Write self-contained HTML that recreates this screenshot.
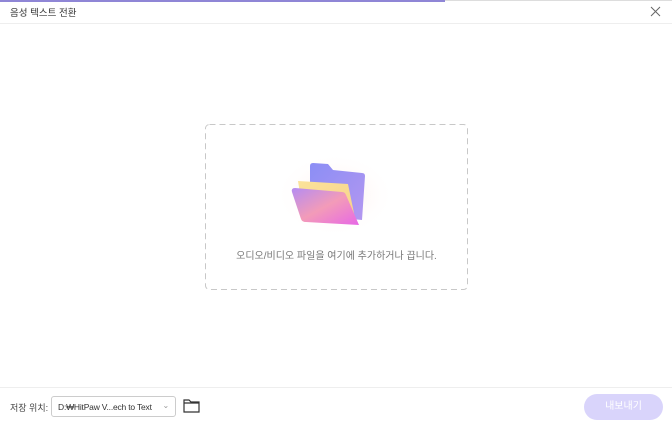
<!DOCTYPE html>
<html><head><meta charset="utf-8"><style>
*{margin:0;padding:0;box-sizing:border-box}
body{width:672px;height:425px;background:#fff;font-family:"Liberation Sans","Noto Sans CJK KR",sans-serif;position:relative;overflow:hidden}
.topbar{position:absolute;top:0;left:0;width:445px;height:2px;background:#8f86d6}
.topbar2{position:absolute;top:0;left:445px;width:227px;height:1px;background:#ddd}
.title{position:absolute;left:10px;top:5px;font-size:9.5px;color:#333}
.close{position:absolute;left:650px;top:6px}
.hline{position:absolute;left:0;top:23px;width:672px;height:1px;background:#eee}
.txt{position:absolute;left:205px;top:247px;width:263px;text-align:center;font-size:10px;color:#777}
.fline{position:absolute;left:0;top:387px;width:672px;height:1px;background:#eee}
.lbl{position:absolute;left:10px;top:401px;font-size:9px;color:#444}
.sel{position:absolute;left:51px;top:396px;width:125px;height:21px;border:1px solid #ccc;border-radius:3px;font-size:8.5px;color:#333;padding:5px 0 0 6px;letter-spacing:-0.2px}
.sel span{position:absolute;right:6px;top:4px;color:#999;font-size:8px}
.btn{position:absolute;left:584px;top:394px;width:79px;height:26px;border-radius:13px;background:#d9d4fb;color:#fff;font-size:10px;text-align:center;line-height:26px}
</style></head><body>
<div class="topbar"></div><div class="topbar2"></div>
<div class="title">음성 텍스트 전환</div>
<svg class="close" width="11" height="11" viewBox="0 0 11 11"><path d="M1 1L10 10M10 1L1 10" stroke="#666" stroke-width="1"/></svg>
<div class="hline"></div>
<svg style="position:absolute;left:204px;top:123px" width="265" height="168"><rect x="1.5" y="1.5" width="262" height="165" rx="4" fill="none" stroke="#c8c8c8" stroke-width="1" stroke-dasharray="6 4"/></svg>
<svg style="position:absolute;left:270px;top:150px" width="130" height="90" viewBox="0 0 130 90">
<defs>
<radialGradient id="g0" cx="50%" cy="50%" r="50%"><stop offset="0" stop-color="#fde9e4"/><stop offset="1" stop-color="#fff" stop-opacity="0"/></radialGradient>
<linearGradient id="g1" x1="0" y1="0" x2="1" y2="1"><stop offset="0" stop-color="#8b8ef5"/><stop offset="1" stop-color="#b497f0"/></linearGradient>
<linearGradient id="g2" x1="0" y1="0" x2="1" y2="1"><stop offset="0" stop-color="#fbe39a"/><stop offset="1" stop-color="#f7d08a"/></linearGradient>
<linearGradient id="g3" x1="0" y1="0" x2="1" y2="1"><stop offset="0" stop-color="#b48cf2"/><stop offset="0.5" stop-color="#f39bb8"/><stop offset="1" stop-color="#e767e6"/></linearGradient>
</defs>
<ellipse cx="65" cy="45" rx="60" ry="42" fill="url(#g0)"/>
<path d="M40 16 Q40 13 43 13 L58 14 L63 20 L92 23 Q95 23 95 26 L92 70 L40 65 Z" fill="url(#g1)"/>
<path d="M28 31 L78 34 L86 73 L34 68 Z" fill="url(#g2)"/>
<path d="M22 42 Q21 38 25 38 L72 42 Q75 42 76 45 L89 75 L36 72 Q32 72 31 69 Z" fill="url(#g3)"/>
</svg>
<div class="txt">오디오/비디오 파일을 여기에 추가하거나 끕니다.</div>
<div class="fline"></div>
<div class="lbl">저장 위치:</div>
<div class="sel">D:₩HitPaw V...ech to Text<span>⌄</span></div>
<svg style="position:absolute;left:183px;top:399px" width="17" height="14" viewBox="0 0 17 14"><path d="M1 1H6L8 3H16V13H1Z M1 4H16" fill="none" stroke="#333" stroke-width="1.2"/></svg>
<div class="btn">내보내기</div>
</body></html>
